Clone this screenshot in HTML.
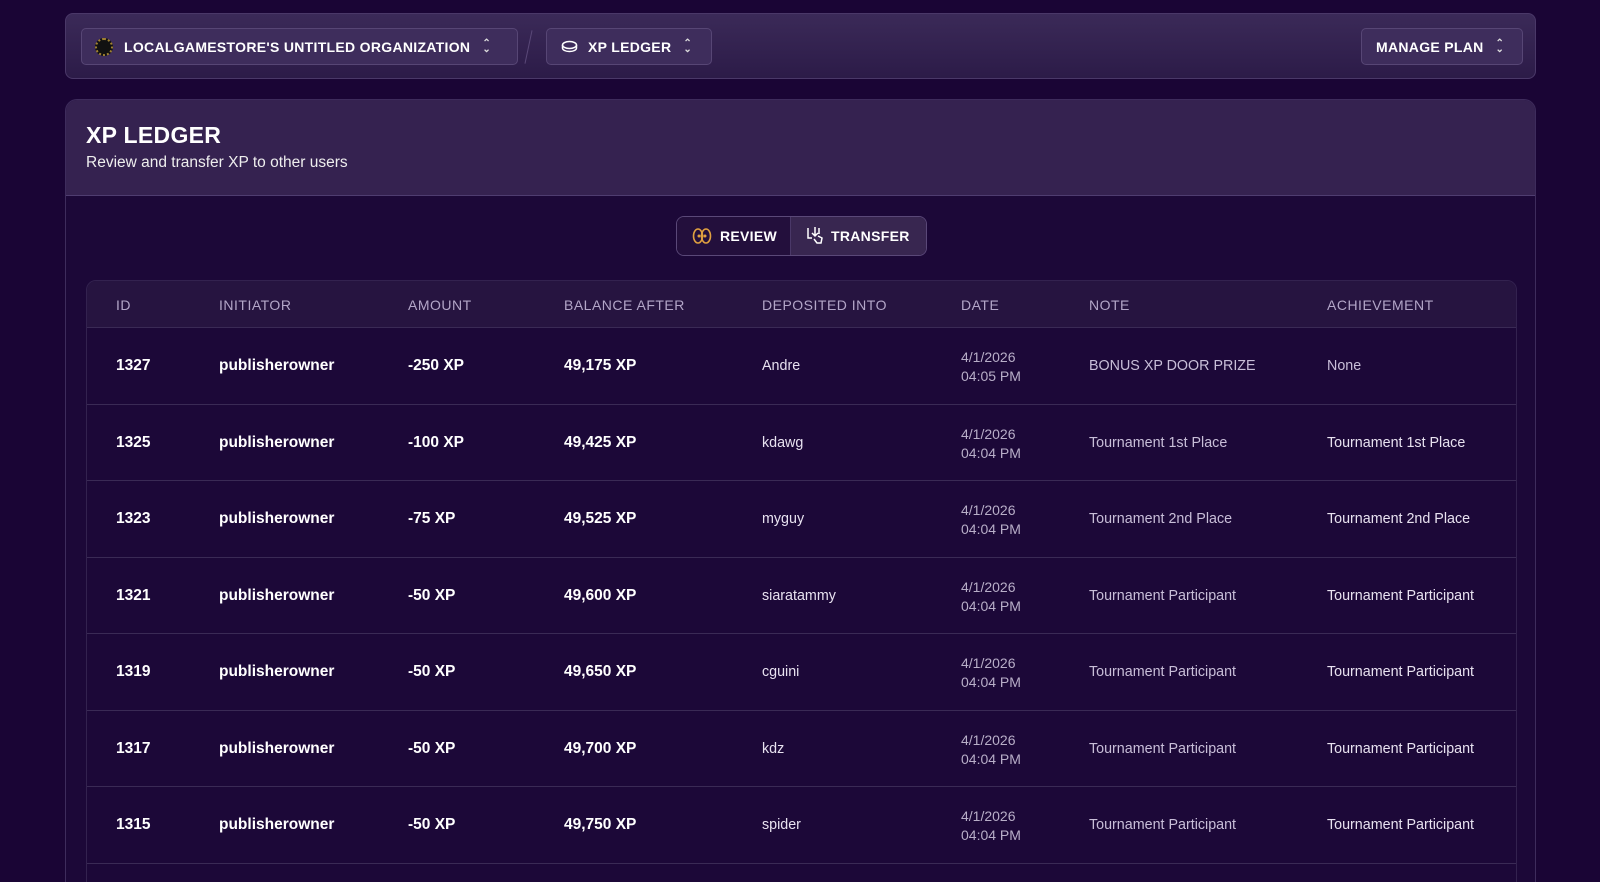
<!DOCTYPE html>
<html><head><style>
*{margin:0;padding:0;box-sizing:border-box}
html,body{width:1600px;height:882px;overflow:hidden}
body{background:#1a0535;font-family:"Liberation Sans",sans-serif;color:#fff;position:relative}
.top{position:absolute;left:65px;top:13px;width:1471px;height:66px;border-radius:8px;background:linear-gradient(#3b2a58,#2c1b48);border:1px solid #4a3868}
.btn{position:absolute;top:14px;height:37px;border-radius:5px;background:#3e2d5c;border:1px solid #574675;font-weight:bold;font-size:14px;display:flex;align-items:center;letter-spacing:.3px}
.chev{font-size:10px;margin-left:12px;color:#ddd;line-height:6px;display:inline-block;text-align:center}
.card{position:absolute;left:65px;top:99px;width:1471px;height:800px;border-radius:12px;border:1px solid #3e2c5c;background:#1c0838;overflow:hidden}
.head{height:96px;background:#352250;border-bottom:1px solid #4f3d70;padding:22px 20px}
.head h1{font-size:23px;font-weight:900;letter-spacing:.3px}
.head p{font-size:15.5px;margin-top:5px;color:#eee}
.tog{position:absolute;left:610px;top:116px;width:251px;height:40px;border-radius:8px;border:1px solid #5a4878;display:flex;overflow:hidden}
.tog div{display:flex;align-items:center;font-weight:bold;font-size:14px;letter-spacing:.3px}
.tbl{position:absolute;left:20px;top:180px;width:1431px;height:700px;border-radius:10px;border:1px solid #33224f;overflow:hidden}
.hr{height:47px;background:#261440;border-bottom:1px solid #3a2a55;position:relative}
.hr span{position:absolute;top:16px;font-size:14px;color:#b3a6c8;letter-spacing:.5px}
.row{height:76.5px;border-bottom:1px solid #3a2a55;position:relative}
.row span{position:absolute;top:30px;font-size:14.3px;color:#e8e2f0}
.row b{position:absolute;top:29px;font-size:15.5px}
.row .d{top:20px;line-height:19px;font-size:14px;color:#b8aec8}
</style></head><body>
<div class="top">
 <div class="btn" style="left:15px;width:437px;padding-left:13px"><span style="width:18px;height:18px;border-radius:50%;background:#111;margin-right:11px;display:inline-block;border:2px dotted #a08030"></span>LOCALGAMESTORE'S UNTITLED ORGANIZATION<span class="chev">⌃<br>⌄</span></div>
 <div style="position:absolute;left:462px;top:16px;width:1px;height:34px;background:#5a4878;transform:rotate(12deg)"></div>
 <div class="btn" style="left:480px;width:166px;padding-left:14px"><svg width="17" height="14" viewBox="0 0 17 14" style="margin-right:10px"><ellipse cx="8.5" cy="5" rx="7" ry="3.5" fill="none" stroke="#fff" stroke-width="1.5"/><path d="M1.5 5v3c0 2 3 3.5 7 3.5s7-1.5 7-3.5V5" fill="none" stroke="#fff" stroke-width="1.5"/></svg>XP LEDGER<span class="chev">⌃<br>⌄</span></div>
 <div class="btn" style="left:1295px;width:162px;padding-left:14px">MANAGE PLAN<span class="chev">⌃<br>⌄</span></div>
</div>
<div class="card">
 <div class="head"><h1>XP LEDGER</h1><p>Review and transfer XP to other users</p></div>
 <div class="tog">
  <div style="width:114px;background:#230f3c;padding-left:15px;border-right:1px solid #4a3868"><svg width="20" height="18" viewBox="0 0 20 18" style="margin-right:8px"><ellipse cx="6" cy="9" rx="4.5" ry="7" fill="none" stroke="#e0a040" stroke-width="1.6"/><ellipse cx="14" cy="9" rx="4.5" ry="7" fill="none" stroke="#e0a040" stroke-width="1.6"/><circle cx="7" cy="9" r="1.5" fill="#e0a040"/><circle cx="13" cy="9" r="1.5" fill="#e0a040"/></svg>REVIEW</div>
  <div style="flex:1;background:#382650;padding-left:14px"><svg width="20" height="22" viewBox="0 0 20 22" style="margin-right:6px"><path d="M3 3v10h4M10 2v9M7 8l3 3 3-3M14 3v6M9 14l3 4h4l1-5-4-2" fill="none" stroke="#fff" stroke-width="1.5"/></svg>TRANSFER</div>
 </div>
 <div class="tbl">
  <div class="hr"><span style="left:29px">ID</span><span style="left:132px">INITIATOR</span><span style="left:321px">AMOUNT</span><span style="left:477px">BALANCE AFTER</span><span style="left:675px">DEPOSITED INTO</span><span style="left:874px">DATE</span><span style="left:1002px">NOTE</span><span style="left:1240px">ACHIEVEMENT</span></div>
  <div class="row"><b style="left:29px">1327</b><b style="left:132px">publisherowner</b><b style="left:321px">-250 XP</b><b style="left:477px">49,175 XP</b><span style="left:675px">Andre</span><span class="d" style="left:874px">4/1/2026<br>04:05 PM</span><span style="left:1002px;color:#c8bed8">BONUS XP DOOR PRIZE</span><span style="left:1240px;color:#c8bed8">None</span></div>
  <div class="row"><b style="left:29px">1325</b><b style="left:132px">publisherowner</b><b style="left:321px">-100 XP</b><b style="left:477px">49,425 XP</b><span style="left:675px">kdawg</span><span class="d" style="left:874px">4/1/2026<br>04:04 PM</span><span style="left:1002px;color:#c8bed8">Tournament 1st Place</span><span style="left:1240px">Tournament 1st Place</span></div>
  <div class="row"><b style="left:29px">1323</b><b style="left:132px">publisherowner</b><b style="left:321px">-75 XP</b><b style="left:477px">49,525 XP</b><span style="left:675px">myguy</span><span class="d" style="left:874px">4/1/2026<br>04:04 PM</span><span style="left:1002px;color:#c8bed8">Tournament 2nd Place</span><span style="left:1240px">Tournament 2nd Place</span></div>
  <div class="row"><b style="left:29px">1321</b><b style="left:132px">publisherowner</b><b style="left:321px">-50 XP</b><b style="left:477px">49,600 XP</b><span style="left:675px">siaratammy</span><span class="d" style="left:874px">4/1/2026<br>04:04 PM</span><span style="left:1002px;color:#c8bed8">Tournament Participant</span><span style="left:1240px">Tournament Participant</span></div>
  <div class="row"><b style="left:29px">1319</b><b style="left:132px">publisherowner</b><b style="left:321px">-50 XP</b><b style="left:477px">49,650 XP</b><span style="left:675px">cguini</span><span class="d" style="left:874px">4/1/2026<br>04:04 PM</span><span style="left:1002px;color:#c8bed8">Tournament Participant</span><span style="left:1240px">Tournament Participant</span></div>
  <div class="row"><b style="left:29px">1317</b><b style="left:132px">publisherowner</b><b style="left:321px">-50 XP</b><b style="left:477px">49,700 XP</b><span style="left:675px">kdz</span><span class="d" style="left:874px">4/1/2026<br>04:04 PM</span><span style="left:1002px;color:#c8bed8">Tournament Participant</span><span style="left:1240px">Tournament Participant</span></div>
  <div class="row"><b style="left:29px">1315</b><b style="left:132px">publisherowner</b><b style="left:321px">-50 XP</b><b style="left:477px">49,750 XP</b><span style="left:675px">spider</span><span class="d" style="left:874px">4/1/2026<br>04:04 PM</span><span style="left:1002px;color:#c8bed8">Tournament Participant</span><span style="left:1240px">Tournament Participant</span></div>
 </div>
</div>
</body></html>
